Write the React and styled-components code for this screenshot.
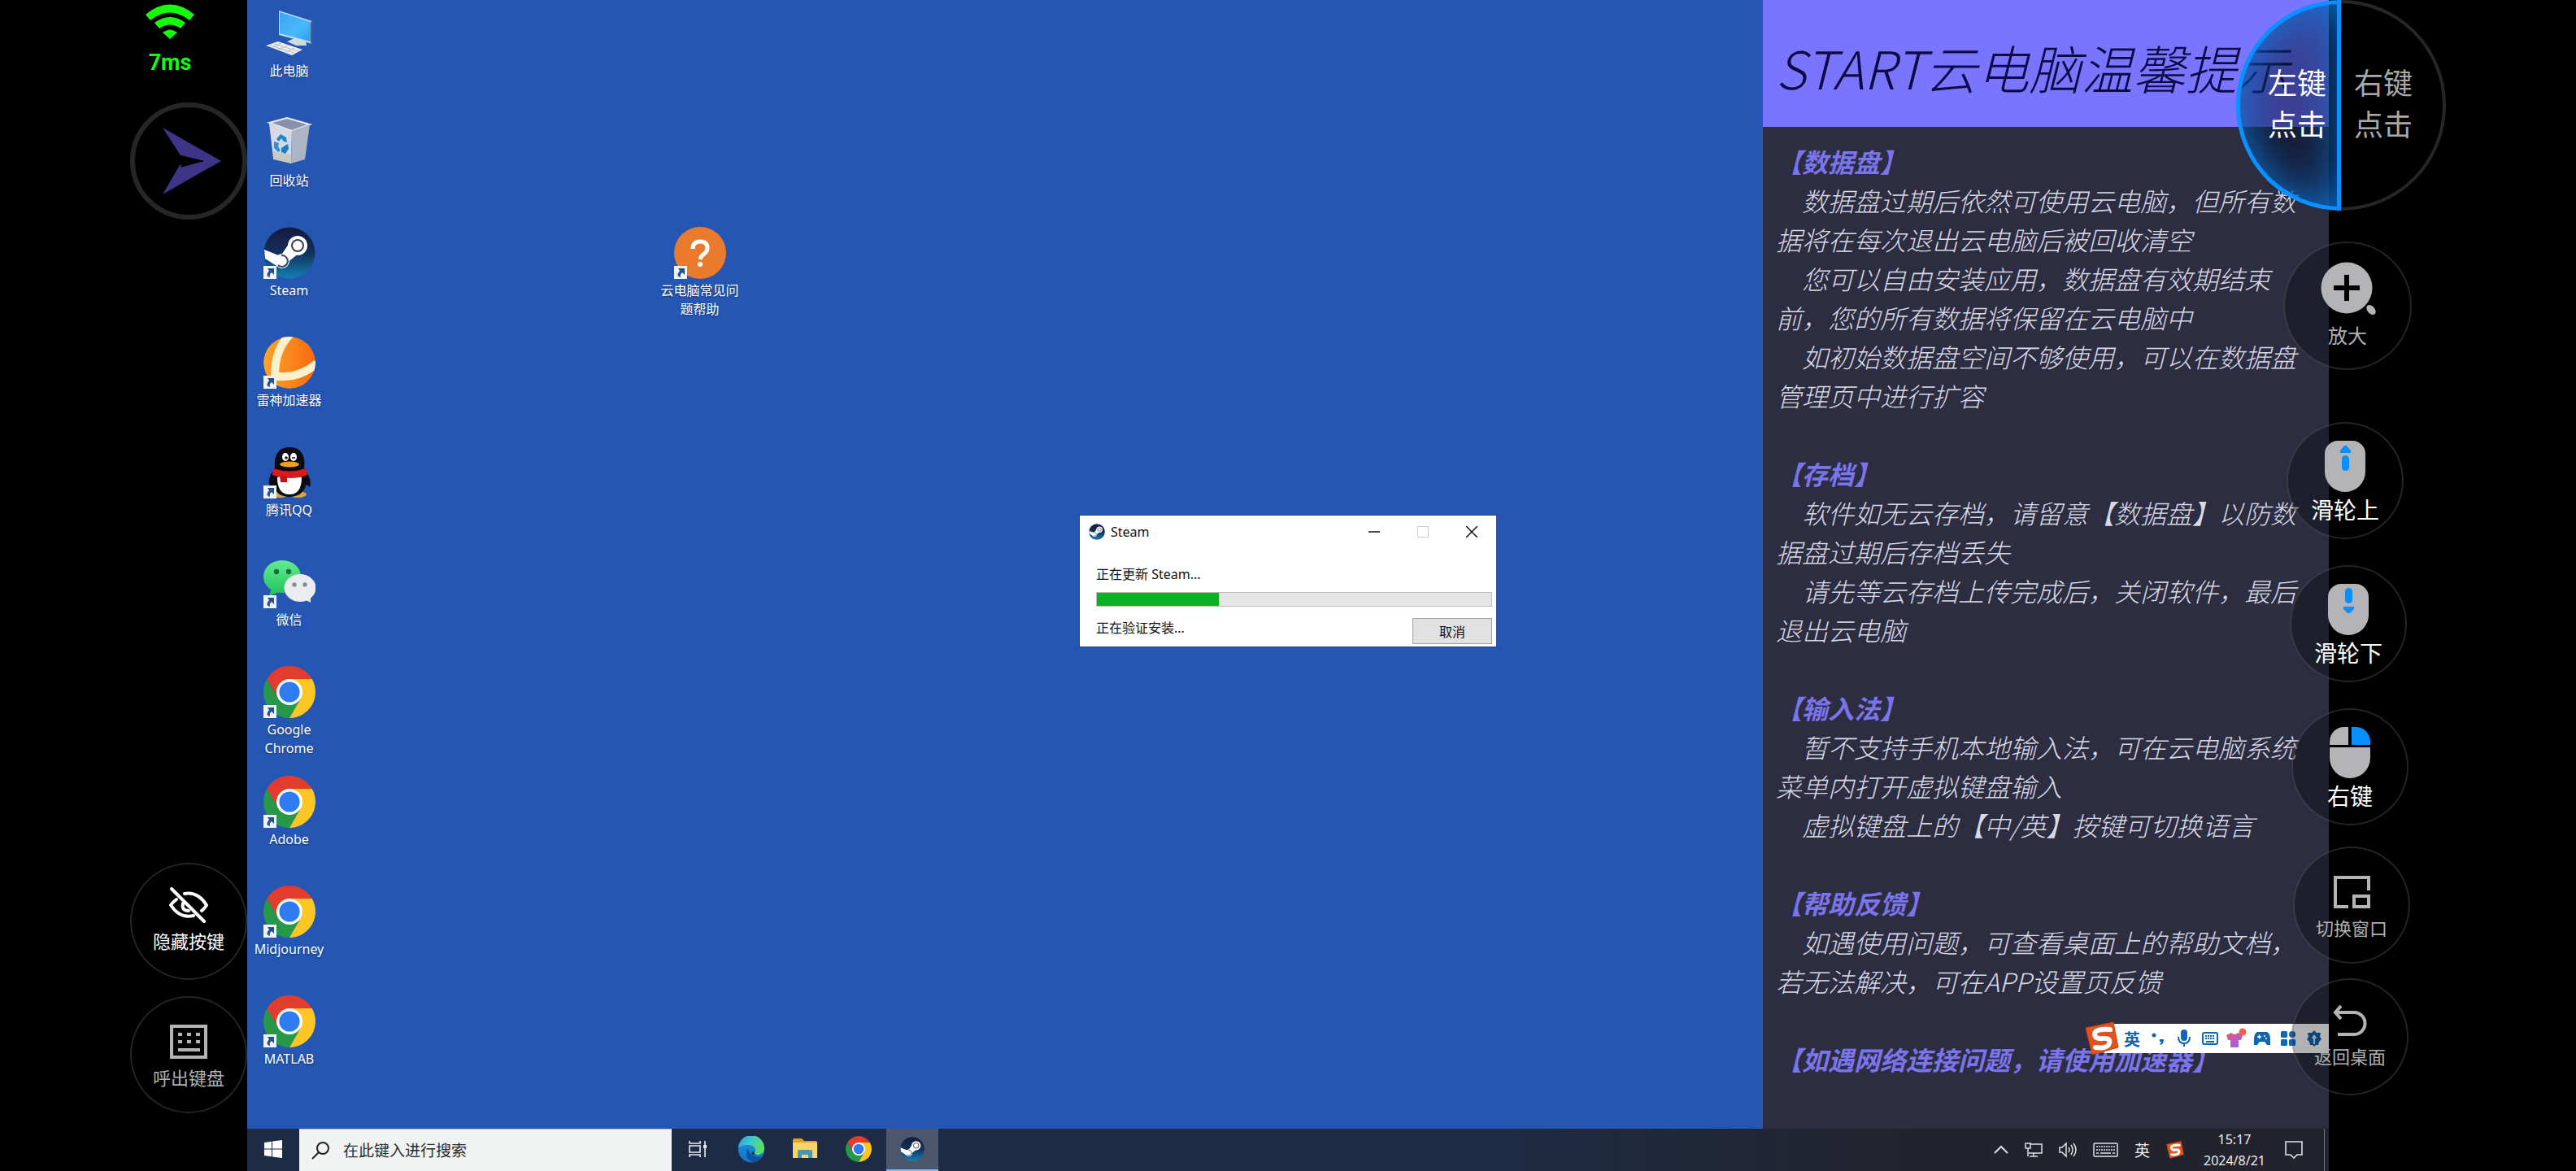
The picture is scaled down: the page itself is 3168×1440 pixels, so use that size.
import React from "react";
import styled, { createGlobalStyle } from "styled-components";

const tips = [
  {
    title: "【数据盘】",
    lines: [
      "数据盘过期后依然可使用云电脑，但所有数据将在每次退出云电脑后被回收清空",
      "您可以自由安装应用，数据盘有效期结束前，您的所有数据将保留在云电脑中",
      "如初始数据盘空间不够使用，可以在数据盘管理页中进行扩容",
    ],
  },
  {
    title: "【存档】",
    lines: [
      "软件如无云存档，请留意【数据盘】以防数据盘过期后存档丢失",
      "请先等云存档上传完成后，关闭软件，最后退出云电脑",
    ],
  },
  {
    title: "【输入法】",
    lines: [
      "暂不支持手机本地输入法，可在云电脑系统菜单内打开虚拟键盘输入",
      "虚拟键盘上的【中/英】按键可切换语言",
    ],
  },
  {
    title: "【帮助反馈】",
    lines: [
      "如遇使用问题，可查看桌面上的帮助文档，若无法解决，可在APP设置页反馈",
    ],
  },
  { title: "【如遇网络连接问题，请使用加速器】", lines: [] },
];

// Icons
const ChromeIcon = ({ size = 64 }) => (
  <svg width={size} height={size} viewBox="0 0 64 64">
    <path d="M59.7 16A32 32 0 0 0 4.3 16L18.1 40 32 32V16z" fill="#e33b2e" />
    <path d="M4.3 16A32 32 0 0 0 32 64L45.9 40 32 32 18.1 40z" fill="#279847" />
    <path d="M32 64A32 32 0 0 0 59.7 16H32v16l13.9 8z" fill="#fcc624" />
    <circle cx="32" cy="32" r="16" fill="#fff" />
    <circle cx="32" cy="32" r="12.6" fill="#2f7bf0" />
  </svg>
);

const SteamIcon = ({ size = 64 }) => (
  <svg width={size} height={size} viewBox="0 0 64 64">
    <defs>
      <linearGradient id="steamBg" x1="0" y1="0" x2="0" y2="1">
        <stop offset="0" stopColor="#171a3c" />
        <stop offset="0.5" stopColor="#12305c" />
        <stop offset="1" stopColor="#1181b4" />
      </linearGradient>
    </defs>
    <circle cx="32" cy="32" r="31.5" fill="url(#steamBg)" />
    <path d="M1 28l20 8 10-15 12 12-14 11-8 7L2 39z" fill="#fff" />
    <circle cx="42" cy="23" r="12" fill="#fff" />
    <circle cx="42" cy="23" r="7" fill="#fff" stroke="#3a4050" strokeWidth="2" />
    <circle cx="23" cy="42" r="9" fill="#fff" />
    <path d="M18 47a7 7 0 1 0 4-12" fill="none" stroke="#3a4a66" strokeWidth="2" />
  </svg>
);

const ComputerIcon = () => (
  <svg width="64" height="64" viewBox="0 0 64 64">
    <defs>
      <linearGradient id="pcScreen" x1="0" y1="0" x2="1" y2="1">
        <stop offset="0" stopColor="#3aa5f2" />
        <stop offset="0.6" stopColor="#4ab9fb" />
        <stop offset="1" stopColor="#2c9cef" />
      </linearGradient>
    </defs>
    <path d="M19 4l41 13v28L19 34z" fill="#b9d7ee" />
    <path d="M20 6l38 12v24L20 32z" fill="url(#pcScreen)" />
    <path d="M58 18l2-1v28l-2-1z" fill="#49637c" />
    <path d="M36 39l6-1 10 4 1 5H40l-11-5z" fill="#d4d9dc" />
    <path d="M3 47l15-5 30 10-13 7z" fill="#eceeef" />
    <path d="M8 47l30 9M13 45l30 9M11 49l11-5M18 52l11-5M27 55l11-5" stroke="#b9bec4" strokeWidth="1" />
  </svg>
);

const BinIcon = () => (
  <svg width="64" height="64" viewBox="0 0 64 64">
    <path d="M7 7l22-6 28 8-22 8z" fill="#8890aa" stroke="#e8ecf2" strokeWidth="2" />
    <path d="M7 8l28 9-1 40-22-7z" fill="#d5dae2" />
    <path d="M35 17l22-8-6 43-17 5z" fill="#adb4c4" />
    <path d="M12 42l22 4v11l-22-5z" fill="#c9c9c4" />
    <path d="M16 27l5-6 7 4 1 6-4-1-3-4-3 4z" fill="#1f86d0" />
    <path d="M13 30l6 2-1 4 3 5-3 2-5-5z" fill="#2b92d8" />
    <path d="M22 38l8-5 1 6-4 6-5-2z" fill="#1c7cc6" />
  </svg>
);

const ThunderIcon = () => (
  <svg width="64" height="64" viewBox="0 0 64 64">
    <defs>
      <linearGradient id="thunder" x1="0" y1="0" x2="1" y2="0">
        <stop offset="0" stopColor="#fba32a" />
        <stop offset="1" stopColor="#f96a10" />
      </linearGradient>
      <clipPath id="thunderClip">
        <circle cx="32" cy="32" r="32" />
      </clipPath>
    </defs>
    <g clipPath="url(#thunderClip)">
      <circle cx="32" cy="32" r="32" fill="url(#thunder)" />
      <path d="M33 -3Q14 15 14 48" fill="none" stroke="#fdf1cc" strokeWidth="10" />
      <path d="M12 48Q40 54 66 33" fill="none" stroke="#fdf1cc" strokeWidth="10" />
    </g>
  </svg>
);

const QQIcon = () => (
  <svg width="64" height="64" viewBox="0 0 64 64">
    <ellipse cx="20" cy="59" rx="11" ry="4" fill="#d9a441" />
    <ellipse cx="42" cy="59" rx="11" ry="4" fill="#d9a441" />
    <path d="M12 30Q4 40 8 50l8-4zM52 30q8 12 5 20l-8-6z" fill="#0a0a12" />
    <path d="M32 1C18 1 13 11 14 26c-6 16-3 36 18 36s25-20 18-36C52 11 46 1 32 1z" fill="#0a0a12" />
    <path d="M17 38q0 21 15 21t15-21q-15-6-30 0z" fill="#fff" />
    <path d="M12 27q20 7 40 0l2 8q-20 8-43 0z" fill="#dc1a1e" />
    <path d="M20 36h9v8h-8z" fill="#c41218" />
    <ellipse cx="27" cy="13" rx="4" ry="5" fill="#fff" />
    <ellipse cx="37" cy="13" rx="4" ry="5" fill="#fff" />
    <circle cx="28" cy="14" r="1.8" fill="#111" />
    <path d="M35 14h4" stroke="#111" strokeWidth="1.5" />
    <ellipse cx="32" cy="22" rx="12" ry="3.5" fill="#f0a020" />
  </svg>
);

const WechatIcon = () => (
  <svg width="64" height="64" viewBox="0 0 64 64">
    <defs>
      <linearGradient id="wechat" x1="0" y1="0" x2="0" y2="1">
        <stop offset="0" stopColor="#63ec8f" />
        <stop offset="1" stopColor="#26c45f" />
      </linearGradient>
    </defs>
    <path d="M10 38l-3 11 12-5z" fill="#26c45f" />
    <ellipse cx="23" cy="25" rx="23" ry="20" fill="url(#wechat)" />
    <circle cx="16" cy="19" r="3.2" fill="#12733a" />
    <circle cx="31" cy="19" r="3.2" fill="#12733a" />
    <path d="M58 49l0 8-10-5z" fill="#dfe2e6" />
    <ellipse cx="45" cy="39" rx="19.5" ry="17" fill="#ebecef" />
    <circle cx="38" cy="35" r="2.7" fill="#8a8c90" />
    <circle cx="51" cy="35" r="2.7" fill="#8a8c90" />
  </svg>
);

const HelpIcon = () => (
  <svg width="64" height="64" viewBox="0 0 64 64">
    <circle cx="32" cy="32" r="32" fill="#ea7a2c" />
    <path d="M23 27q0-9 9-9t9 8q0 4-4 7t-5 7" fill="none" stroke="#fff" strokeWidth="5" />
    <circle cx="32" cy="46" r="3" fill="#fff" />
  </svg>
);

const EdgeIcon = () => (
  <svg width="32" height="33" viewBox="0 0 32 33">
    <defs>
      <linearGradient id="edgeTop" x1="0" y1="0" x2="1" y2="0.3">
        <stop offset="0" stopColor="#2a9fdc" />
        <stop offset="0.5" stopColor="#3cc6d2" />
        <stop offset="1" stopColor="#5fdc62" />
      </linearGradient>
      <linearGradient id="edgeSide" x1="0" y1="0" x2="0" y2="1">
        <stop offset="0" stopColor="#1b92dc" />
        <stop offset="1" stopColor="#1573c8" />
      </linearGradient>
    </defs>
    <circle cx="16" cy="16.500" r="16" fill="url(#edgeSide)" />
    <path d="M0 15A16 16 0 0 1 32 15c0 6-5 8-9 8-3 0-4-1-3-3 3-4-1-9-8-9C6 11 2 13 0 15z" fill="url(#edgeTop)" />
    <path d="M12 15c-4 5-2 17 8 17 4-1 8-4 10-7-8 2-17-1-18-10z" fill="#10529f" />
    <path d="M20 18q-2 4 2 5-4 1-6-2z" fill="#1d2b44" />
  </svg>
);

const FolderIcon = () => (
  <svg width="30" height="26" viewBox="0 0 30 26">
    <path d="M0 2q0-2 2-2h9l3 3h14q2 0 2 2v19H0z" fill="#e0a324" />
    <path d="M0 5h30v19H0z" fill="#f8d568" />
    <path d="M6 24v-8q0-2 2-2h14q2 0 2 2v8h-5v-4h-8v4z" fill="#4a93bb" />
  </svg>
);

const SogouIcon = ({ size = 42 }) => (
  <svg width={size} height={size} viewBox="0 0 42 42">
    <path d="M1 8L35 1l6 31L9 41z" fill="#e2521d" stroke="#c8410f" strokeWidth="1" />
    <path d="M31 10Q12 9 12 15.500T22 21t8 6-17 5" fill="none" stroke="#fff" strokeWidth="6" strokeLinecap="round" />
  </svg>
);

const WindowsIcon = () => (
  <svg width="22" height="22" viewBox="0 0 22 22" fill="#fff">
    <path d="M0 3l9-1.300V10.500H0zM10 1.500L22 0v10.500H10zM0 11.500h9v8.800L0 19zM10 11.500h12V22l-12-1.600z" />
  </svg>
);

const SearchIcon = () => (
  <svg width="24" height="24" viewBox="0 0 24 24" fill="none" stroke="#222" strokeWidth="2">
    <circle cx="15" cy="9" r="7" />
    <path d="M10 14L2 22" />
  </svg>
);

const TaskViewIcon = () => (
  <svg width="24" height="22" viewBox="0 0 24 22" fill="none" stroke="#e8ebf0" strokeWidth="1.600">
    <path d="M2 1v3h13V1M2 21v-3h13v3M2 7h13v8H2zM21 1v20" />
    <path d="M19 6h4v4h-4z" fill="#e8ebf0" stroke="none" />
  </svg>
);

const ArrowIcon = () => (
  <svg width="16" height="16" viewBox="0 0 16 16">
    <rect width="16" height="16" fill="#eef3fb" />
    <path d="M5 3h8v8l-3-3q-3 2-2 6-5-1-3-5 1-2 2-3z" fill="#284f8c" />
  </svg>
);

const WifiIcon = () => (
  <svg width="60" height="44" viewBox="0 0 60 44">
    <path d="M0 13Q30-12 60 13l-6 7Q30 1 6 20z" fill="#16fa0c" />
    <path d="M11 23Q30 9 49 23l-6 7q-13-9-26 0z" fill="#16fa0c" />
    <path d="M21 35q9-7 18 0l-9 8z" fill="#16fa0c" />
  </svg>
);

const PointerIcon = () => (
  <svg width="82" height="84" viewBox="0 0 82 84">
    <path d="M9 1l72 41L9 83l21-36 30-5-29-7z" fill="#3e3589" />
    <path d="M31 35l29 7-29 8 2-5z" fill="#000" />
  </svg>
);

const EyeOffIcon = () => (
  <svg width="48" height="44" viewBox="0 0 48 44" fill="none" stroke="#fff" strokeWidth="4" strokeLinecap="round">
    <path d="M19 8q16-3 27 14-3 5-6 7M9 15q-4 3-7 7 11 17 28 13" />
    <path d="M17 20q-2 9 7 9" />
    <path d="M3 2l40 40" />
  </svg>
);

const KeyboardIcon = () => (
  <svg width="46" height="42" viewBox="0 0 46 42" fill="none" stroke="#b4b4b4" strokeWidth="4">
    <rect x="2" y="2" width="42" height="38" />
    <path d="M10 12h5M21 12h5M32 12h5M10 21h5M21 21h5M32 21h5M10 31h27" />
  </svg>
);

const ZoomIcon = () => (
  <svg width="70" height="68" viewBox="0 0 70 68">
    <circle cx="34" cy="33" r="31.500" fill="#b4b4b6" />
    <path d="M18 33h32M34 17v32" stroke="#000" strokeWidth="6" />
    <ellipse cx="64" cy="60" rx="4.500" ry="7" transform="rotate(-40 64 60)" fill="#b4b4b6" />
  </svg>
);

const WheelIcon = ({ down }) => (
  <svg width="50" height="63" viewBox="0 0 50 63">
    <path d="M16 0h18a16 16 0 0 1 16 16v22a25 25 0 0 1-50 0V16A16 16 0 0 1 16 0z" fill="#b4b4b6" />
    {down ? (
      <g fill="#0a8fff">
        <rect x="21" y="5" width="9" height="19" rx="4.500" />
        <path d="M19 28h13v3l-5 5h-3l-5-5z" />
      </g>
    ) : (
      <g fill="#0a8fff">
        <rect x="21" y="18" width="9" height="19" rx="4.500" />
        <path d="M19 15h13v-3l-5-6h-3l-5 6z" />
      </g>
    )}
  </svg>
);

const RightMouseIcon = () => (
  <svg width="50" height="63" viewBox="0 0 50 63">
    <path d="M0 22v-4A18 18 0 0 1 18 0h5v22z" fill="#b4b4b6" />
    <path d="M50 22v-4A18 18 0 0 0 32 0h-5v22z" fill="#0a8fff" />
    <path d="M0 25h50v13a25 25 0 0 1-50 0z" fill="#b4b4b6" />
  </svg>
);

const SwitchIcon = () => (
  <svg width="45" height="40" viewBox="0 0 45 40" fill="none" stroke="#b4b4b4" strokeWidth="4">
    <path d="M18 38H2V2h41v16" />
    <rect x="25" y="25" width="18" height="13" />
  </svg>
);

const BackIcon = () => (
  <svg width="42" height="40" viewBox="0 0 42 40" fill="none" stroke="#b4b4b4" strokeWidth="4">
    <path d="M10 2L3 10l7 8M3 10h23a13 13 0 0 1 0 27H6" />
  </svg>
);

const MicIcon = () => (
  <svg width="18" height="22" viewBox="0 0 18 22">
    <rect x="5" y="0" width="8" height="14" rx="4" fill="#0e67b4" />
    <path d="M2 9q0 8 7 8t7-8M9 17v4" fill="none" stroke="#0e67b4" strokeWidth="2" />
  </svg>
);

const KeysIcon = () => (
  <svg width="20" height="16" viewBox="0 0 20 16" fill="none" stroke="#0e67b4" strokeWidth="2">
    <rect x="1" y="1" width="18" height="14" rx="2" />
    <path d="M4 5h12M4 8h12" strokeDasharray="2 1" />
    <path d="M5 12h10" />
  </svg>
);

const ShirtIcon = () => (
  <svg width="26" height="26" viewBox="0 0 26 26">
    <defs>
      <linearGradient id="shirt" x1="0" y1="0" x2="1" y2="1">
        <stop offset="0" stopColor="#f0506e" />
        <stop offset="1" stopColor="#7f6bff" />
      </linearGradient>
    </defs>
    <path d="M1 9l6-3q4 4 8 0l6 3-2 6h-3v9H6v-9H3z" fill="url(#shirt)" />
    <circle cx="21" cy="5" r="4.500" fill="#f2604d" />
  </svg>
);

const GamepadIcon = () => (
  <svg width="20" height="18" viewBox="0 0 20 18">
    <path d="M4 1h12q4 2 4 9v7h-4l-3-4H7l-3 4H0v-7q0-7 4-9z" fill="#0e67b4" />
    <path d="M4 7h5M6.500 4.500v5M12 6h2M14 9h2" stroke="#fff" strokeWidth="1.500" />
  </svg>
);

const AppsIcon = () => (
  <svg width="18" height="18" viewBox="0 0 18 18" fill="#0e67b4">
    <rect width="8" height="8" rx="1.500" />
    <circle cx="14" cy="4" r="4" />
    <rect y="10" width="8" height="8" rx="1.500" />
    <rect x="10" y="10" width="8" height="8" rx="1.500" />
  </svg>
);

const GearIcon = () => (
  <svg width="20" height="20" viewBox="0 0 20 20">
    <path d="M10 0l3 3h5l-1 5 2 3-3 3-1 4h-3l-2 2-2-2H5l-1-4-3-3 2-3-1-5h5z" fill="#0e67b4" />
    <path d="M10 5l3 4-2 2v6H9v-6L7 9z" fill="#dfe6ee" />
  </svg>
);

const ChevronIcon = () => (
  <svg width="18" height="12" viewBox="0 0 18 12" fill="none" stroke="#dfe0e6" strokeWidth="2">
    <path d="M1 10l8-8 8 8" />
  </svg>
);

const NetworkIcon = () => (
  <svg width="22" height="18" viewBox="0 0 22 18" fill="none" stroke="#dfe0e6" strokeWidth="1.500">
    <path d="M7 2h14v11H5M11 13v4M6 17h10M4 7v10" />
    <rect x="1" y="1" width="6" height="6" />
  </svg>
);

const VolumeIcon = () => (
  <svg width="22" height="20" viewBox="0 0 22 20" fill="none" stroke="#dfe0e6" strokeWidth="1.500">
    <path d="M1 7h3l5-5v16l-5-5H1zM12 7q2 3 0 6M15 4q4 6 0 12M18 2q6 8 0 16" />
  </svg>
);

const TrayKeyboardIcon = () => (
  <svg width="31" height="18" viewBox="0 0 31 18" fill="none" stroke="#dfe0e6" strokeWidth="1.500">
    <rect x="1" y="1" width="29" height="16" rx="1" />
    <path d="M4 5h23M4 9h23" strokeDasharray="2 1" />
    <path d="M4 13h3M9 13h13M24 13h3" />
  </svg>
);

const NoticeIcon = () => (
  <svg width="22" height="22" viewBox="0 0 22 22" fill="none" stroke="#dfe0e6" strokeWidth="1.600">
    <path d="M1 1h20v16h-6l-4 4-4-4H1z" />
  </svg>
);

const shortcuts = [
  { name: "此电脑", icon: <ComputerIcon />, plain: true },
  { name: "回收站", icon: <BinIcon />, plain: true },
  { name: "Steam", icon: <SteamIcon /> },
  { name: "雷神加速器", icon: <ThunderIcon /> },
  { name: "腾讯QQ", icon: <QQIcon /> },
  { name: "微信", icon: <WechatIcon /> },
  { name: "Google Chrome", icon: <ChromeIcon /> },
  { name: "Adobe", icon: <ChromeIcon /> },
  { name: "Midjourney", icon: <ChromeIcon /> },
  { name: "MATLAB", icon: <ChromeIcon /> },
];

const Shortcut = ({ name, icon, plain, column, row }) => (
  <ShortcutButton type="button" $column={column} $row={row}>
    <ShortcutIcon>
      {icon}
      {!plain && (
        <Badge>
          <ArrowIcon />
        </Badge>
      )}
    </ShortcutIcon>
    <span>{name}</span>
  </ShortcutButton>
);

const SteamDialog = () => (
  <Dialog role="dialog" aria-label="Steam">
    <TitleBar>
      <SteamIcon size={20} />
      <DialogTitle>Steam</DialogTitle>
      <WindowButton type="button" aria-label="最小化">
        <svg width="14" height="14" viewBox="0 0 14 14" stroke="#111" strokeWidth="1.500">
          <path d="M0 7h14" />
        </svg>
      </WindowButton>
      <WindowButton type="button" aria-label="最大化" disabled>
        <svg width="14" height="14" viewBox="0 0 14 14" fill="none" stroke="#ccc">
          <rect x="0.500" y="0.500" width="13" height="13" />
        </svg>
      </WindowButton>
      <WindowButton type="button" aria-label="关闭">
        <svg width="14" height="14" viewBox="0 0 14 14" stroke="#111" strokeWidth="1.500">
          <path d="M0 0l14 14M14 0L0 14" />
        </svg>
      </WindowButton>
    </TitleBar>
    <DialogBody>
      <p>正在更新 Steam...</p>
      <Progress role="progressbar" aria-valuenow={31} aria-label="正在更新 Steam">
        <div style={{ width: "31%" }} />
      </Progress>
      <DialogFooter>
        <p>正在验证安装...</p>
        <CancelButton type="button">取消</CancelButton>
      </DialogFooter>
    </DialogBody>
  </Dialog>
);

const TipsPanel = () => (
  <Tips>
    <TipsHeader>
      <h1>START云电脑温馨提示</h1>
    </TipsHeader>
    <TipsBody>
      {tips.map((tip) => (
        <section key={tip.title}>
          <h2>{tip.title}</h2>
          {tip.lines.map((line) => (
            <p key={line}>{line}</p>
          ))}
        </section>
      ))}
    </TipsBody>
  </Tips>
);

const InputBar = () => (
  <ImeBar>
    <SogouIcon />
    <ImeItem type="button">英</ImeItem>
    <ImeItem type="button" aria-label="标点">
      <svg width="16" height="18" viewBox="0 0 16 18" fill="#0e67b4">
        <circle cx="3" cy="5" r="2.500" />
        <path d="M10 10h5q0 6-4 7l-1-1q2-1 2-3h-2z" />
      </svg>
    </ImeItem>
    <ImeItem type="button" aria-label="语音"><MicIcon /></ImeItem>
    <ImeItem type="button" aria-label="键盘"><KeysIcon /></ImeItem>
    <ImeItem type="button" aria-label="皮肤"><ShirtIcon /></ImeItem>
    <ImeItem type="button" aria-label="游戏"><GamepadIcon /></ImeItem>
    <ImeItem type="button" aria-label="工具箱"><AppsIcon /></ImeItem>
    <ImeItem type="button" aria-label="设置"><GearIcon /></ImeItem>
  </ImeBar>
);

const BottomBar = () => (
  <Taskbar>
    <TaskButton type="button" aria-label="开始"><WindowsIcon /></TaskButton>
    <SearchBox>
      <SearchIcon />
      <input type="text" aria-label="搜索" placeholder="在此键入进行搜索" />
    </SearchBox>
    <PinnedApps>
      <TaskButton type="button" aria-label="任务视图"><TaskViewIcon /></TaskButton>
      <TaskButton type="button" aria-label="Edge"><EdgeIcon /></TaskButton>
      <TaskButton type="button" aria-label="文件资源管理器"><FolderIcon /></TaskButton>
      <TaskButton type="button" aria-label="Chrome"><ChromeIcon size={32} /></TaskButton>
      <TaskButton type="button" aria-label="Steam" $active><SteamIcon size={30} /></TaskButton>
    </PinnedApps>
    <Tray>
      <ChevronIcon />
      <NetworkIcon />
      <VolumeIcon />
      <TrayKeyboardIcon />
      <span>英</span>
      <SogouIcon size={22} />
      <Clock>
        <span>15:17</span>
        <span>2024/8/21</span>
      </Clock>
      <NoticeIcon />
      <ShowDesktop type="button" aria-label="显示桌面" />
    </Tray>
  </Taskbar>
);

const App = () => {
  return (
    <>
      <GlobalStyle />
      <Page lang="zh-CN">
        <Desktop>
          <Workspace>
            <Shortcuts>
              {shortcuts.map((item, i) => (
                <Shortcut key={item.name} {...item} column={1} row={i + 1} />
              ))}
              <Shortcut name="云电脑常见问题帮助" icon={<HelpIcon />} column={6} row={3} />
            </Shortcuts>
            <TipsPanel />
            <SteamDialog />
            <InputBar />
          </Workspace>
          <BottomBar />
        </Desktop>

        <Latency>
          <WifiIcon />
          <span>7ms</span>
        </Latency>
        <PointerButton type="button" aria-label="鼠标模式">
          <PointerIcon />
        </PointerButton>
        <RoundButton type="button" $left={160} $top={1061} $pad={28} $bright>
          <IconSlot><EyeOffIcon /></IconSlot>
          隐藏按键
        </RoundButton>
        <RoundButton type="button" $left={160} $top={1225} $pad={32}>
          <IconSlot><KeyboardIcon /></IconSlot>
          呼出键盘
        </RoundButton>

        <ClickPad>
          <ClickHalf type="button" $active>
            <span>左键</span>
            <span>点击</span>
          </ClickHalf>
          <ClickHalf type="button">
            <span>右键</span>
            <span>点击</span>
          </ClickHalf>
        </ClickPad>
        <RoundButton type="button" $right={202} $top={297} $pad={20} $size={158} $font={24}>
          <IconSlot $height={72}><ZoomIcon /></IconSlot>
          放大
        </RoundButton>
        <RoundButton type="button" $right={212} $top={519} $pad={20} $font={28} $bright>
          <IconSlot $height={64}><WheelIcon /></IconSlot>
          滑轮上
        </RoundButton>
        <RoundButton type="button" $right={208} $top={695} $pad={20} $font={28} $bright>
          <IconSlot $height={64}><WheelIcon down /></IconSlot>
          滑轮下
        </RoundButton>
        <RoundButton type="button" $right={206} $top={871} $pad={20} $font={28} $bright>
          <IconSlot $height={64}><RightMouseIcon /></IconSlot>
          右键
        </RoundButton>
        <RoundButton type="button" $right={204} $top={1041} $pad={32}>
          <IconSlot><SwitchIcon /></IconSlot>
          切换窗口
        </RoundButton>
        <RoundButton type="button" $right={206} $top={1203} $pad={28}>
          <IconSlot><BackIcon /></IconSlot>
          返回桌面
        </RoundButton>
      </Page>
    </>
  );
};

// Styled Components
const GlobalStyle = createGlobalStyle`
  * {
    box-sizing: border-box;
    margin: 0;
    padding: 0;
  }
  body {
    background: #000;
    font-family: "Noto Sans", "Noto Sans CJK SC", sans-serif;
  }
  button {
    border: none;
    background: none;
    font-family: inherit;
  }
  svg {
    display: block;
    flex-shrink: 0;
  }
`;

const Page = styled.div`
  position: relative;
  min-height: 100vh;
  display: flex;
  padding: 0 304px;
  background: #000;
`;

const Desktop = styled.main`
  flex: 1;
  display: flex;
  flex-direction: column;
  background: #2556b3;
`;

const Workspace = styled.div`
  position: relative;
  flex: 1;
  display: flex;
`;

const Shortcuts = styled.div`
  flex: 1;
  display: grid;
  grid-template-columns: repeat(6, 101px);
  grid-auto-rows: 135px;
  align-content: start;
  padding: 9px 0 0 1px;
`;

const ShortcutButton = styled.button`
  grid-column: ${(props) => props.$column};
  grid-row: ${(props) => props.$row};
  display: flex;
  flex-direction: column;
  align-items: center;
  gap: 3px;
  color: #fff;
  font-size: 16px;
  line-height: 23px;
  text-shadow: 0 1px 2px rgba(0, 0, 0, 0.4);
`;

const ShortcutIcon = styled.div`
  position: relative;
`;

const Badge = styled.div`
  position: absolute;
  left: 0;
  bottom: 0;
`;

const Dialog = styled.div`
  position: absolute;
  left: 40%;
  top: 634px;
  width: 512px;
  background: #fff;
  outline: 1px solid #2b478c;
  color: #111;
  font-size: 16px;
`;

const TitleBar = styled.div`
  display: flex;
  align-items: center;
  height: 40px;
  padding-left: 11px;
`;

const DialogTitle = styled.span`
  flex: 1;
  padding-left: 7px;
`;

const WindowButton = styled.button`
  display: flex;
  justify-content: center;
  width: 60px;
`;

const DialogBody = styled.div`
  padding: 20px 5px 3px 20px;
  p {
    line-height: 24px;
  }
`;

const Progress = styled.div`
  height: 18px;
  margin: 10px 0 14px;
  border: 1px solid #bcbcbc;
  background: #e6e6e6;
  div {
    height: 100%;
    background: #0bb025;
  }
`;

const DialogFooter = styled.div`
  display: flex;
  justify-content: space-between;
  align-items: flex-start;
`;

const CancelButton = styled.button`
  width: 98px;
  height: 32px;
  border: 1px solid #a0a0a0;
  background: #e1e1e1;
  color: #111;
  font-size: 16px;
`;

const Tips = styled.aside`
  width: 696px;
  background: #2c2d41;
  font-family: "Noto Sans CJK SC", sans-serif;
  font-style: italic;
  font-weight: 300;
  text-spacing-trim: space-all;
`;

const TipsHeader = styled.header`
  display: flex;
  align-items: center;
  height: 156px;
  padding: 8px 16px 0;
  background: #7a75fe;
  color: #0d0b45;
  h1 {
    font-size: 64px;
    font-weight: 300;
    white-space: nowrap;
  }
`;

const TipsBody = styled.div`
  padding: 18px 16px;
  color: #d9d9e6;
  font-size: 32px;
  line-height: 48px;
  section {
    margin-bottom: 48px;
  }
  section:last-child {
    margin-bottom: 0;
  }
  h2 {
    color: #7b74ea;
    font-size: 32px;
    font-weight: 700;
  }
  p {
    width: 656px;
    text-indent: 1em;
  }
`;

const ImeBar = styled.div`
  position: absolute;
  right: 0;
  top: 1259px;
  display: flex;
  align-items: center;
  height: 36px;
  padding-right: 2px;
  background: linear-gradient(90deg, transparent 24px, #fff 24px);
`;

const ImeItem = styled.button`
  display: flex;
  align-items: center;
  justify-content: center;
  width: 32px;
  color: #0e67b4;
  font-size: 20px;
  font-weight: 700;
`;

const Taskbar = styled.footer`
  display: flex;
  height: 52px;
  background: linear-gradient(90deg, #1d2b44 60%, #23232d 80%);
`;

const PinnedApps = styled.div`
  display: flex;
  gap: 2px;
`;

const TaskButton = styled.button`
  display: flex;
  align-items: center;
  justify-content: center;
  width: 64px;
  border-bottom: 2px solid ${(props) => (props.$active ? "#83bbe9" : "transparent")};
  background: ${(props) => (props.$active ? "#4c566d" : "none")};
`;

const SearchBox = styled.label`
  display: flex;
  align-items: center;
  gap: 16px;
  width: 458px;
  padding-left: 14px;
  border-top: 1px solid #b9c6dc;
  background: #f1f3f3;
  input {
    flex: 1;
    border: none;
    outline: none;
    background: none;
    font-family: inherit;
    font-size: 19px;
  }
  input::placeholder {
    color: #2b2b2b;
  }
`;

const Tray = styled.div`
  display: flex;
  align-items: center;
  gap: 20px;
  margin-left: auto;
  color: #eceef2;
  font-size: 19px;
`;

const Clock = styled.div`
  display: flex;
  flex-direction: column;
  align-items: center;
  width: 84px;
  font-size: 16px;
  line-height: 26px;
`;

const ShowDesktop = styled.button`
  width: 6px;
  height: 52px;
  margin-left: 6px;
  border-left: 1px solid #70717a;
`;

const Latency = styled.div`
  position: absolute;
  left: 176px;
  top: 5px;
  display: flex;
  flex-direction: column;
  align-items: center;
  gap: 12px;
  width: 66px;
  color: #16fa0c;
  font-family: Roboto, sans-serif;
  font-size: 27px;
  font-weight: 700;
  line-height: 32px;
`;

const PointerButton = styled.button`
  position: absolute;
  left: 160px;
  top: 126px;
  display: flex;
  align-items: center;
  justify-content: center;
  width: 144px;
  height: 144px;
  border: 6px solid #262626;
  border-radius: 50%;
`;

const RoundButton = styled.button`
  position: absolute;
  top: ${(props) => props.$top}px;
  left: ${(props) => (props.$left ? `${props.$left}px` : "auto")};
  right: ${(props) => (props.$right ? `${props.$right}px` : "auto")};
  display: flex;
  flex-direction: column;
  align-items: center;
  gap: 8px;
  width: ${(props) => props.$size || 144}px;
  height: ${(props) => props.$size || 144}px;
  padding-top: ${(props) => props.$pad}px;
  border: 2px solid rgba(120, 120, 120, 0.3);
  border-radius: 50%;
  background: rgba(0, 0, 0, 0.3);
  color: ${(props) => (props.$bright ? "#fff" : "#b0b0b0")};
  font-size: ${(props) => props.$font || 22}px;
  line-height: 28px;
  white-space: nowrap;
`;

const IconSlot = styled.div`
  display: flex;
  align-items: center;
  justify-content: center;
  height: ${(props) => props.$height || 44}px;
`;

const ClickPad = styled.div`
  position: absolute;
  right: 160px;
  top: 0;
  display: flex;
`;

const ClickHalf = styled.button`
  display: flex;
  flex-direction: column;
  justify-content: center;
  align-items: ${(props) => (props.$active ? "flex-end" : "flex-start")};
  width: 129px;
  height: 259px;
  padding: ${(props) => (props.$active ? "0 13px 4px" : "0 16px 4px")};
  border: ${(props) => (props.$active ? "5px solid #0a90ff" : "4px solid #262626")};
  border-left-width: ${(props) => (props.$active ? "5px" : "0")};
  border-radius: ${(props) => (props.$active ? "129px 0 0 129px" : "0 129px 129px 0")};
  background: ${(props) => (props.$active ? "rgba(0, 10, 40, 0.5)" : "rgba(0, 0, 0, 0.3)")};
  box-shadow: ${(props) => (props.$active ? "inset 0 0 56px rgba(10, 130, 240, 0.85)" : "none")};
  color: ${(props) => (props.$active ? "#fff" : "#a8a8a8")};
  font-size: 36px;
  line-height: 51px;
`;

export default App;
